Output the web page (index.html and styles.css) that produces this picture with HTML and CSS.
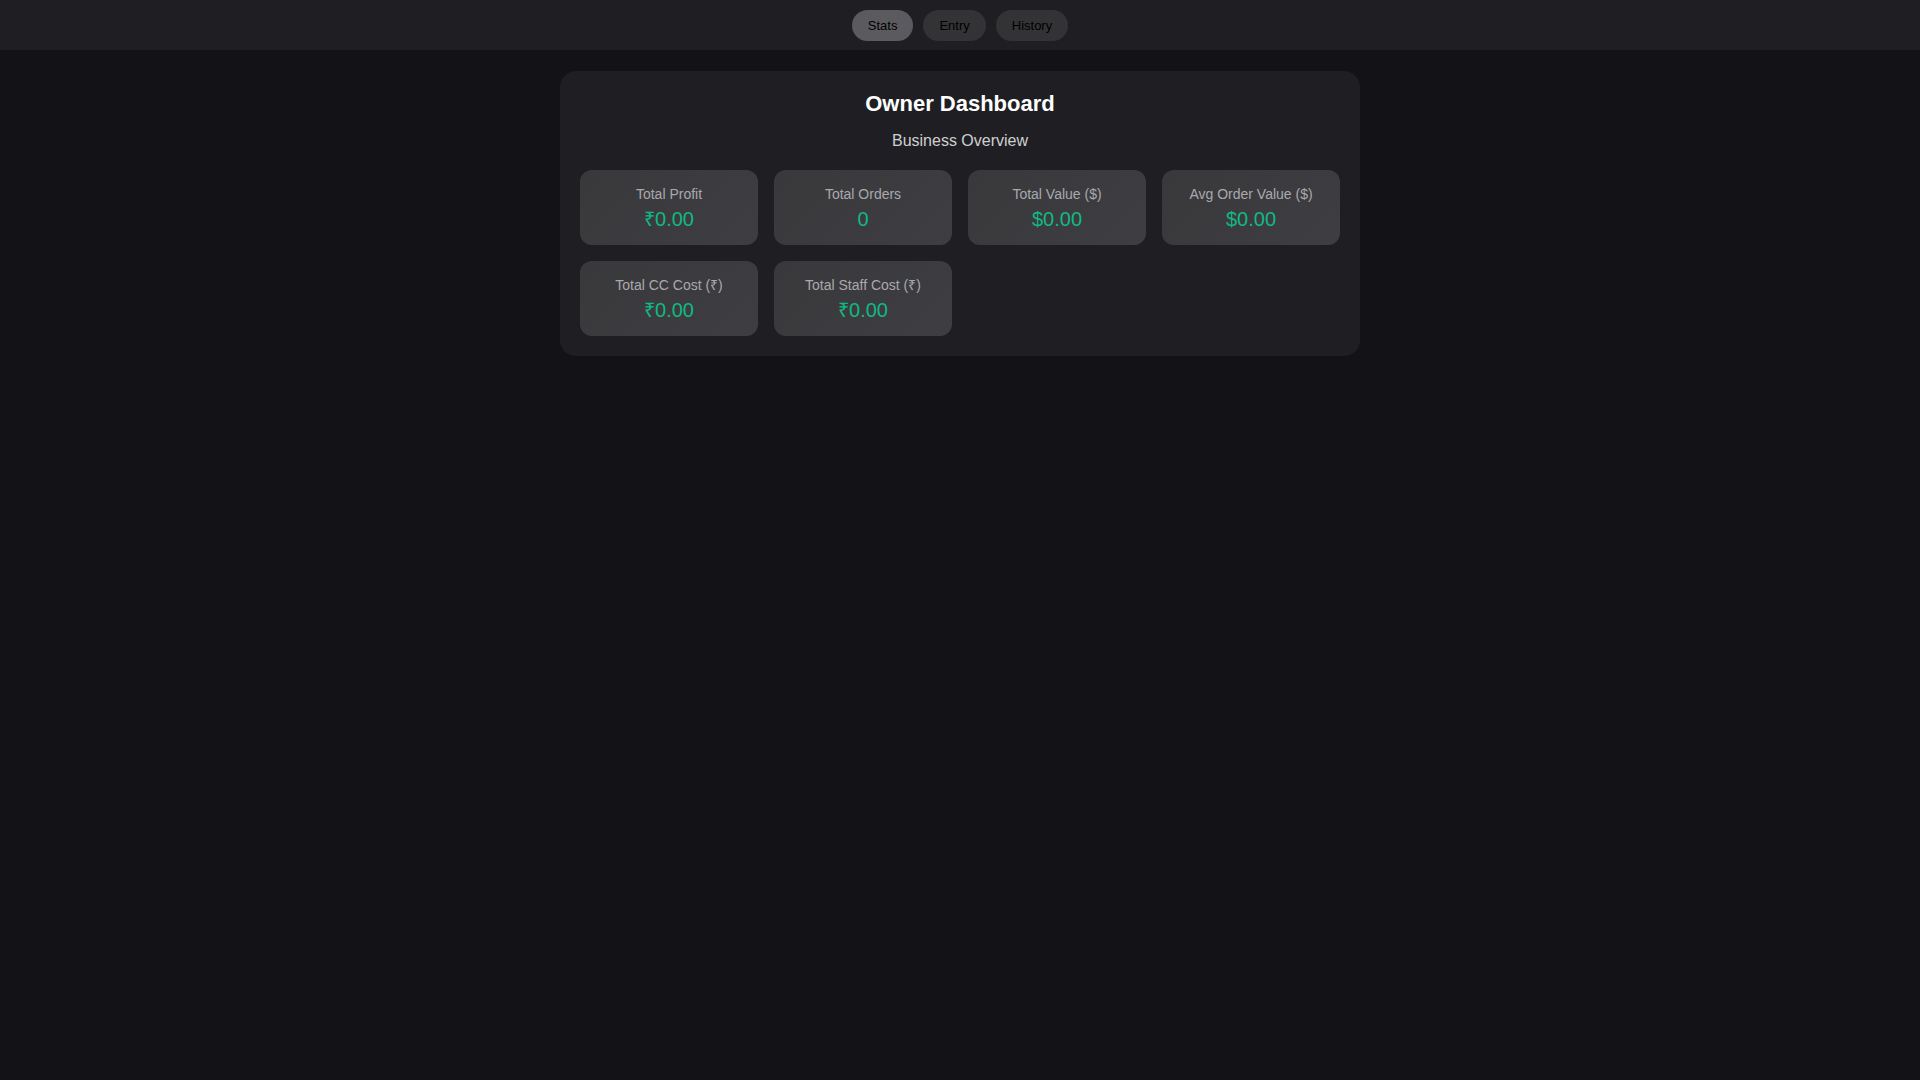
FILE: index.html
```html
<!DOCTYPE html>
<html lang="en">
<head>
<meta charset="utf-8">
<title>Owner Dashboard</title>
<link rel="stylesheet" href="styles.css">
</head>
<body>
<nav class="topnav">
  <button class="tab tab-active">Stats</button>
  <button class="tab">Entry</button>
  <button class="tab">History</button>
</nav>
<main class="card">
  <h2 class="title">Owner Dashboard</h2>
  <p class="subtitle">Business Overview</p>
  <div class="stats">
    <div class="stat"><div class="label">Total Profit</div><div class="value">₹0.00</div></div>
    <div class="stat"><div class="label">Total Orders</div><div class="value">0</div></div>
    <div class="stat"><div class="label">Total Value ($)</div><div class="value">$0.00</div></div>
    <div class="stat"><div class="label">Avg Order Value ($)</div><div class="value">$0.00</div></div>
    <div class="stat"><div class="label">Total CC Cost (₹)</div><div class="value">₹0.00</div></div>
    <div class="stat"><div class="label">Total Staff Cost (₹)</div><div class="value">₹0.00</div></div>
  </div>
</main>
</body>
</html>
```
FILE: styles.css
```css
* { box-sizing: border-box; }
html, body {
  margin: 0;
  padding: 0;
  background: #131317;
  font-family: "Liberation Sans", Arial, sans-serif;
  color: #e5e5e5;
}
.topnav {
  height: 50px;
  background: #1f1f23;
  display: flex;
  justify-content: center;
  align-items: flex-start;
  gap: 10px;
  padding-top: 10px;
}
.tab {
  font-family: "Liberation Sans", Arial, sans-serif;
  font-size: 13px;
  line-height: 15px;
  padding: 8px 16px;
  border: none;
  border-radius: 16px;
  background: #333336;
  color: #000000;
}
.tab-active {
  background: #5b5b5f;
}
.card {
  width: 800px;
  margin: 21px auto 0;
  background: #1f1f23;
  border-radius: 16px;
  padding: 20px;
}
.title {
  margin: 0;
  text-align: center;
  font-size: 22px;
  font-weight: bold;
  color: #ffffff;
  line-height: 25px;
}
.subtitle {
  margin: 16px 0 20px;
  text-align: center;
  font-size: 16px;
  line-height: 18px;
  color: #cfcfd2;
}
.stats {
  display: grid;
  grid-template-columns: repeat(4, 1fr);
  gap: 16px;
}
.stat {
  background: linear-gradient(135deg, #39393c, #3e3e42);
  border-radius: 12px;
  padding: 16px 10px 14px;
  text-align: center;
  height: 75px;
}
.label {
  font-size: 14px;
  line-height: 16px;
  color: #a9a9ad;
}
.value {
  margin-top: 6px;
  font-size: 20px;
  line-height: 23px;
  color: #10b981;
}
```
